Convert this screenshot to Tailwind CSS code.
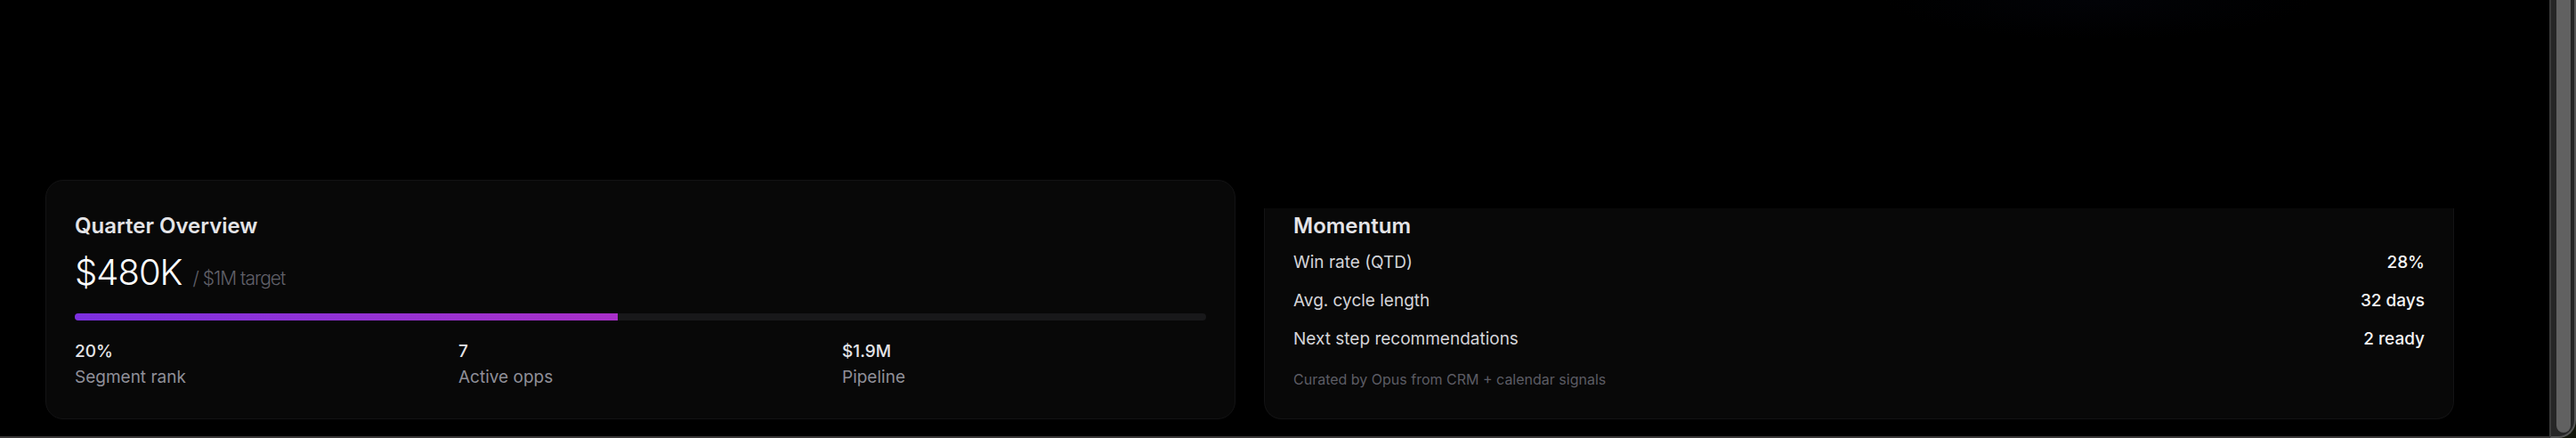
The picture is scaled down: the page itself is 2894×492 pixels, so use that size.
<!DOCTYPE html>
<html lang="en">
<head>
<meta charset="utf-8">
<title>Quarter Overview</title>
<script src="https://cdn.jsdelivr.net/npm/@tailwindcss/browser@4"></script>
</head>
<body class="flex min-h-screen bg-black font-['Inter',sans-serif] text-zinc-200">
  <div class="flex flex-1 flex-col border-b-2 border-[#3a3838] bg-[radial-gradient(ellipse_240px_44px_at_82.3%_0,#020307,transparent)]">
    <main class="mt-auto grid grid-cols-2 items-end gap-8 pb-[19px] pl-[51px] pr-[107px]">
      <section class="rounded-[20px] border border-[#131314] bg-[#080808] px-8 pt-[35px] pb-8">
        <h2 class="text-2xl leading-8 font-semibold">Quarter Overview</h2>
        <p class="mt-3 flex items-baseline gap-3 text-[40px] leading-[48px] font-light tracking-tight text-white">$480K <span class="text-[21px] leading-none text-[#606068]">/ $1M target</span></p>
        <div class="mt-[22px] h-2 overflow-hidden rounded-full bg-[#18181a]" role="progressbar" aria-label="Quarter target" aria-valuenow="48" aria-valuemin="0" aria-valuemax="100">
          <div class="h-full bg-linear-to-r from-[#7c2fe0] to-[#a92fc9]" style="width:48%"></div>
        </div>
        <dl class="mt-5 grid grid-cols-3 gap-[22px] text-[19px] leading-[29px]">
          <div class="flex flex-col-reverse"><dt class="text-[#8f8f98]">Segment rank</dt><dd class="font-medium">20%</dd></div>
          <div class="flex flex-col-reverse"><dt class="text-[#8f8f98]">Active opps</dt><dd class="font-medium">7</dd></div>
          <div class="flex flex-col-reverse"><dt class="text-[#8f8f98]">Pipeline</dt><dd class="font-medium">$1.9M</dd></div>
        </dl>
      </section>
      <section class="rounded-b-[20px] border border-t-0 border-[#131314] bg-[#080808] px-8 pt-1 pb-8">
        <h2 class="text-2xl leading-8 font-semibold">Momentum</h2>
        <dl class="mt-[11px] flex flex-col gap-[15px] text-[19px] leading-7 text-zinc-300">
          <div class="flex justify-between"><dt>Win rate (QTD)</dt><dd class="font-medium text-zinc-100">28%</dd></div>
          <div class="flex justify-between"><dt>Avg. cycle length</dt><dd class="font-medium text-zinc-100">32 days</dd></div>
          <div class="flex justify-between"><dt>Next step recommendations</dt><dd class="font-medium text-zinc-100">2 ready</dd></div>
        </dl>
        <p class="mt-[19px] text-base leading-6 text-[#5c5c64]">Curated by Opus from CRM + calendar signals</p>
      </section>
    </main>
  </div>
  <div class="flex bg-[#12150a]" aria-hidden="true">
    <div class="flex w-[30px] overflow-hidden rounded-br-[20px] border-r-2 border-b-2 border-l-2 border-r-[#565656] border-b-[#565656] border-l-[#3a3a3a] bg-[#262626] pr-1 pb-1 pl-1.5">
      <div class="w-4 rounded-b-full bg-[#616161]"></div>
    </div>
  </div>
</body>
</html>
